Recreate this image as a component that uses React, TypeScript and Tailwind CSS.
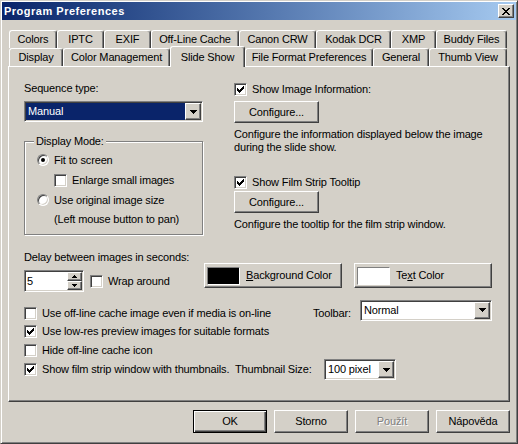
import React from 'react';

const raised =
  'border border-t-white border-l-white border-r-[#404040] border-b-[#404040] shadow-[inset_-1px_-1px_#808080]';
const sunken =
  'border border-t-[#808080] border-l-[#808080] border-r-white border-b-white shadow-[inset_1px_1px_#404040,inset_-1px_-1px_#d4d0c8]';

const backTabs: [string, string][] = [
  ['Colors', 'w-[48px]'],
  ['IPTC', 'w-[47px]'],
  ['EXIF', 'w-[47px]'],
  ['Off-Line Cache', 'w-[88px]'],
  ['Canon CRW', 'w-[77px]'],
  ['Kodak DCR', 'w-[75px]'],
  ['XMP', 'w-[45px]'],
  ['Buddy Files', 'w-[71px]'],
];

const frontTabs: [string, string][] = [
  ['Display', 'w-[54px]'],
  ['Color Management', 'w-[107px]'],
  ['Slide Show', 'w-[75px]'],
  ['File Format Preferences', 'w-[128px]'],
  ['General', 'w-[56px]'],
  ['Thumb View', 'w-[78px]'],
];

const CheckMark = () => (
  <svg width="7" height="7" viewBox="0 0 7 7" shapeRendering="crispEdges">
    <path
      d="M0 2h1v3H0z M1 3h1v3H1z M2 4h1v3H2z M3 3h1v3H3z M4 2h1v3H4z M5 1h1v3H5z M6 0h1v3H6z"
      fill="#000"
    />
  </svg>
);

const Check = ({ checked }: { checked?: boolean }) => (
  <span className={`flex h-[13px] w-[13px] shrink-0 items-center justify-center bg-white ${sunken}`}>
    {checked && <CheckMark />}
  </span>
);

const Radio = ({ checked }: { checked?: boolean }) => (
  <span className="flex h-[12px] w-[12px] shrink-0 items-center justify-center rounded-full border border-t-[#808080] border-l-[#808080] border-r-white border-b-white bg-white shadow-[inset_1px_1px_#404040,inset_-1px_-1px_#d4d0c8]">
    {checked && <span className="h-[4px] w-[4px] rounded-full bg-black" />}
  </span>
);

const DownArrow = () => (
  <svg width="7" height="4" viewBox="0 0 7 4" shapeRendering="crispEdges">
    <path d="M0 0h7v1H0z M1 1h5v1H1z M2 2h3v1H2z M3 3h1v1H3z" fill="#000" />
  </svg>
);

const SmallUp = () => (
  <svg width="5" height="3" viewBox="0 0 5 3" shapeRendering="crispEdges">
    <path d="M2 0h1v1H2z M1 1h3v1H1z M0 2h5v1H0z" fill="#000" />
  </svg>
);

const SmallDown = () => (
  <svg width="5" height="3" viewBox="0 0 5 3" shapeRendering="crispEdges">
    <path d="M0 0h5v1H0z M1 1h3v1H1z M2 2h1v1H2z" fill="#000" />
  </svg>
);

const CloseGlyph = () => (
  <svg width="8" height="7" viewBox="0 0 8 7" shapeRendering="crispEdges">
    <path
      d="M0 0h2v1H0z M6 0h2v1H6z M1 1h2v1H1z M5 1h2v1H5z M2 2h4v1H2z M3 3h2v1H3z M2 4h4v1H2z M1 5h2v1H1z M5 5h2v1H5z M0 6h2v1H0z M6 6h2v1H6z"
      fill="#000"
    />
  </svg>
);

const Combo = ({ value, highlight, className }: { value: string; highlight?: boolean; className: string }) => (
  <div className={`flex h-[21px] shrink-0 bg-white p-[1px] ${sunken} ${className}`}>
    <div className={`flex flex-1 items-center pl-[2px] ${highlight ? 'bg-[#0a246a] text-white' : ''}`}>{value}</div>
    <div className={`flex w-[16px] items-center justify-center bg-[#d4d0c8] ${raised}`}>
      <DownArrow />
    </div>
  </div>
);

const CheckRow = ({ checked, label, className = '' }: { checked?: boolean; label: string; className?: string }) => (
  <div className={`flex items-center gap-[5px] whitespace-nowrap ${className}`}>
    <Check checked={checked} />
    <span>{label}</span>
  </div>
);

const App = () => {
  return (
    <div className="flex h-[444px] w-[518px] flex-col border border-t-[#d4d0c8] border-l-[#d4d0c8] border-r-[#404040] border-b-[#404040] bg-[#d4d0c8] p-[1px] font-['Liberation_Sans',Arial,sans-serif] text-[11px] leading-[13px] tracking-[-0.15px] text-black shadow-[inset_1px_1px_#fff,inset_-1px_-1px_#808080]">
      {/* title bar */}
      <div className="flex h-[18px] items-center bg-linear-to-r from-[#0a246a] to-[#a6caf0] pl-[2px] pr-[2px]">
        <span className="font-bold tracking-[0.5px] text-white">Program Preferences</span>
        <button type="button" className={`ml-auto flex h-[14px] w-[16px] items-center justify-center bg-[#d4d0c8] ${raised}`}>
          <CloseGlyph />
        </button>
      </div>

      <div className="px-[6px] pt-[10px]">
        {/* back row of tabs */}
        <div className="flex h-[18px] pl-[1px]">
          {backTabs.map(([label, w]) => (
            <div
              key={label}
              className={`flex h-[18px] shrink-0 items-center justify-center rounded-t-[3px] border-t border-l border-r border-t-white border-l-white border-r-[#404040] whitespace-nowrap shadow-[inset_-1px_0_#808080] ${w}`}
            >
              {label}
            </div>
          ))}
        </div>
        {/* front row of tabs */}
        <div className="flex h-[18px] items-end pl-[1px]">
          {frontTabs.map(([label, w]) =>
            label === 'Slide Show' ? (
              <div
                key={label}
                className={`relative z-10 -mb-[1px] flex h-[21px] shrink-0 items-center justify-center rounded-t-[3px] border-t border-l border-r border-t-white border-l-white border-r-[#404040] bg-[#d4d0c8] whitespace-nowrap shadow-[inset_-1px_0_#808080] ${w}`}
              >
                {label}
              </div>
            ) : (
              <div
                key={label}
                className={`flex h-[18px] shrink-0 items-center justify-center rounded-t-[3px] border-t border-l border-r border-t-white border-l-white border-r-[#404040] whitespace-nowrap shadow-[inset_-1px_0_#808080] ${w}`}
              >
                {label}
              </div>
            ),
          )}
        </div>

        {/* tab panel */}
        <div className={`h-[336px] pl-[15px] pt-[15px] ${raised}`}>
          <div className="grid grid-cols-[179px_1fr] gap-x-[31px]">
            <div>
              <div>Sequence type:</div>
              <Combo value="Manual" highlight className="mt-[6px] w-[179px]" />
              <fieldset className="mt-[13px] border border-[#808080] px-0 pb-[6px] pt-[2px] shadow-[inset_1px_1px_#fff,1px_1px_#fff]">
                <legend className="ml-[9px] bg-[#d4d0c8] px-[2px]">Display Mode:</legend>
                <div className="pl-[12px]">
                  <div className="flex h-[20px] items-center gap-[5px] whitespace-nowrap">
                    <Radio checked />
                    <span>Fit to screen</span>
                  </div>
                  <CheckRow label="Enlarge small images" className="h-[20px] pl-[17px]" />
                  <div className="flex h-[20px] items-center gap-[5px] whitespace-nowrap">
                    <Radio />
                    <span>Use original image size</span>
                  </div>
                  <div className="flex h-[18px] items-center pl-[17px] whitespace-nowrap">(Left mouse button to pan)</div>
                </div>
              </fieldset>
            </div>

            <div>
              <CheckRow checked label="Show Image Information:" className="h-[15px]" />
              <button type="button" className={`mt-[4px] flex h-[22px] w-[85px] items-center justify-center ${raised}`}>
                Configure...
              </button>
              <p className="mt-[5px]">
                Configure the information displayed below the image
                <br />
                during the slide show.
              </p>
              <CheckRow checked label="Show Film Strip Tooltip" className="mt-[21px] h-[15px]" />
              <button type="button" className={`mt-[1px] flex h-[22px] w-[85px] items-center justify-center ${raised}`}>
                Configure...
              </button>
              <p className="mt-[5px]">Configure the tooltip for the film strip window.</p>
            </div>
          </div>

          {/* delay + colours */}
          <div className="mt-[16px] flex items-start">
            <div className="w-[180px]">
              <div className="whitespace-nowrap">Delay between images in seconds:</div>
              <div className="mt-[6px] flex items-center">
                <div className={`flex h-[22px] w-[60px] bg-white p-[1px] ${sunken}`}>
                  <div className="flex flex-1 items-center pl-[1px]">5</div>
                  <div className="flex w-[15px] flex-col">
                    <div className={`flex flex-1 items-center justify-center bg-[#d4d0c8] ${raised}`}>
                      <SmallUp />
                    </div>
                    <div className={`flex flex-1 items-center justify-center bg-[#d4d0c8] ${raised}`}>
                      <SmallDown />
                    </div>
                  </div>
                </div>
                <CheckRow label="Wrap around" className="ml-[6px]" />
              </div>
            </div>
            <button type="button" className={`mt-[12px] flex h-[25px] w-[138px] items-center px-[2px] ${raised}`}>
              <span className="h-[18px] w-[33px] border border-t-[#808080] border-l-[#808080] border-r-white border-b-white bg-black" />
              <span className="ml-[6px] whitespace-nowrap">
                <u>B</u>ackground Color
              </span>
            </button>
            <button type="button" className={`ml-[12px] mt-[12px] flex h-[25px] w-[138px] items-center px-[2px] ${raised}`}>
              <span className="h-[18px] w-[33px] border border-t-[#808080] border-l-[#808080] border-r-white border-b-white bg-white" />
              <span className="ml-[6px] whitespace-nowrap">
                Te<u>x</u>t Color
              </span>
            </button>
          </div>

          {/* option rows */}
          <div className="mt-[12px]">
            <div className="flex h-[18px] items-center whitespace-nowrap">
              <CheckRow label="Use off-line cache image even if media is on-line" className="w-[289px]" />
              <span className="w-[47px]">Toolbar:</span>
              <Combo value="Normal" className="mb-[6px] w-[132px]" />
            </div>
            <CheckRow checked label="Use low-res preview images for suitable formats" className="h-[19px]" />
            <CheckRow label="Hide off-line cache icon" className="h-[19px]" />
            <div className="flex h-[19px] items-center whitespace-nowrap">
              <CheckRow checked label={'Show film strip window with thumbnails.\u00a0 Thumbnail Size:'} className="w-[300px]" />
              <Combo value="100 pixel" className="w-[72px]" />
            </div>
          </div>
        </div>

        {/* dialog buttons */}
        <div className="mt-[8px] flex justify-end gap-[7px]">
          <button
            type="button"
            className="flex h-[23px] w-[74px] items-center justify-center border border-black shadow-[inset_1px_1px_#fff,inset_-1px_-1px_#404040,inset_-2px_-2px_#808080]"
          >
            OK
          </button>
          <button type="button" className={`flex h-[23px] w-[74px] items-center justify-center ${raised}`}>
            Storno
          </button>
          <button
            type="button"
            className={`flex h-[23px] w-[74px] items-center justify-center text-[#808080] [text-shadow:1px_1px_#fff] ${raised}`}
          >
            Použít
          </button>
          <button type="button" className={`flex h-[23px] w-[74px] items-center justify-center ${raised}`}>
            Nápověda
          </button>
        </div>
      </div>
    </div>
  );
};

export default App;
